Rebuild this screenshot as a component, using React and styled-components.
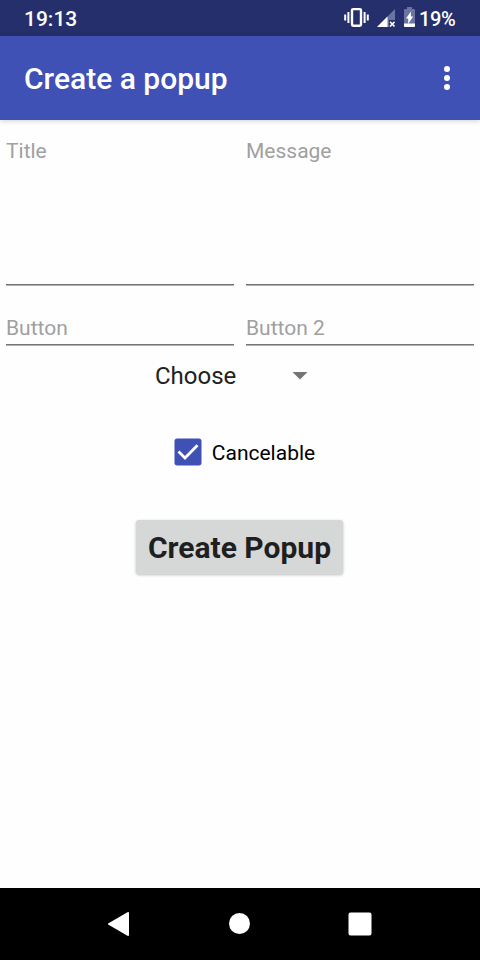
import { useState } from "react";
import styled, { createGlobalStyle } from "styled-components";

const GlobalStyle = createGlobalStyle`
  * {
    box-sizing: border-box;
  }
  body {
    margin: 0;
    background-color: #fff;
    font-family: Roboto, "Liberation Sans", sans-serif;
  }
`;

const Screen = styled.div`
  display: flex;
  flex-direction: column;
  width: 480px;
  height: 960px;
  overflow: hidden;
  background-color: #fefefe;
`;

const StatusBar = styled.header`
  display: flex;
  align-items: center;
  justify-content: space-between;
  flex: none;
  height: 36px;
  padding: 2px 24.5px 0 24px;
  background-color: #242f6b;
  color: #fff;
  font-size: 21px;
  font-weight: 500;
  line-height: 34px;
`;

const StatusIcons = styled.div`
  display: flex;
  align-items: center;
  height: 34px;
`;

const StatusSvg = styled.svg`
  display: block;
  margin: 0 ${({ $gap }) => $gap}px 4px 0;
`;

const Battery = styled.span`
  font-size: 20px;
  letter-spacing: -0.3px;
`;

const AppBar = styled.div`
  display: flex;
  align-items: center;
  justify-content: space-between;
  flex: none;
  height: 84px;
  padding: 0 30px 0 24px;
  background-color: #3f51b5;
  box-shadow: 0 1px 5px rgba(0, 0, 0, 0.18);
`;

const AppTitle = styled.h1`
  margin: 0;
  padding-top: 2px;
  color: #fff;
  font-size: 30px;
  font-weight: 500;
  line-height: 36px;
`;

const MenuButton = styled.button`
  display: flex;
  flex-direction: column;
  gap: 3px;
  padding: 0;
  border: 0;
  background: none;
`;

const Dot = styled.span`
  width: 6px;
  height: 6px;
  border-radius: 50%;
  background-color: #fff;
`;

const Form = styled.main`
  display: flex;
  flex: 1;
  flex-direction: column;
  align-items: center;
`;

const Fields = styled.div`
  display: grid;
  grid-template-columns: 228px 228px;
  grid-template-rows: 166px 60px;
  column-gap: 12px;
`;

const Field = styled.div`
  display: flex;
  align-items: ${({ $tall }) => ($tall ? "flex-start" : "flex-end")};
  padding: ${({ $tall }) => ($tall ? "18px 0 0" : "0 0 4px")};
  border-bottom: 1px solid #b0b0b0;
  box-shadow: inset 0 -1px 0 #757575;
  color: #a0a0a0;
  font-size: 21px;
  line-height: 26px;
`;

const Spinner = styled.button`
  display: flex;
  align-items: center;
  justify-content: space-between;
  width: 153px;
  height: 36px;
  margin: 12px 0 0 -17px;
  padding: 0;
  border: 0;
  background: none;
  color: #212121;
  font-family: inherit;
  font-size: 24px;
`;

const CheckRow = styled.button`
  display: flex;
  align-items: center;
  gap: 10px;
  height: 48px;
  margin: 34px 0 0 9px;
  padding: 0;
  border: 0;
  background: none;
  color: #000;
  font-family: inherit;
  font-size: 21px;
`;

const CheckBox = styled.span`
  width: 28px;
  height: 28px;

  svg {
    display: block;
  }
`;

const CheckLabel = styled.span`
  padding-top: 2px;
`;

const CreateButton = styled.button`
  width: 207px;
  height: 54px;
  margin: 44px 0 0 -1px;
  padding: 2px 0 0;
  border: 0;
  border-radius: 3px;
  background-color: #d6d8d7;
  box-shadow: 0 1px 3px rgba(0, 0, 0, 0.26);
  color: #1f1f1f;
  font-family: inherit;
  font-size: 30px;
  font-weight: 700;
  line-height: 36px;
`;

const NavBar = styled.nav`
  display: flex;
  align-items: center;
  justify-content: space-between;
  flex: none;
  height: 72px;
  padding: 0 108px;
  background-color: #000;
`;

const VibrateIcon = () => (
  <StatusSvg $gap={8} width="25" height="20" viewBox="0 -0.5 25 20">
    <rect x="8" y="1.6" width="9" height="16.6" rx="1.2" fill="none" stroke="#fff" strokeWidth="2.4" />
    <path d="M1.2 7v6M4.4 4.5v11M20.6 4.5v11M23.8 7v6" stroke="#fff" strokeWidth="2" />
  </StatusSvg>
);

const SignalIcon = () => (
  <StatusSvg $gap={9} width="18" height="20" viewBox="0 0 18 20">
    <path d="M18 2v11h-6v7H0z" fill="#6b73a0" />
    <path d="M10.5 9.5V20H0z" fill="#fff" />
    <path d="M13 14.8l4.5 4.7M17.5 14.8L13 19.5" stroke="#fff" strokeWidth="1.6" />
  </StatusSvg>
);

const BatteryIcon = () => (
  <StatusSvg $gap={3.5} width="11" height="20" viewBox="0 0 11 20">
    <path d="M3 0h5v2h2q1 0 1 1v16q0 1-1 1H1q-1 0-1-1V3q0-1 1-1h2z" fill="#6b73a0" />
    <path d="M0 16.5h11V19q0 1-1 1H1q-1 0-1-1z" fill="#fff" />
    <path d="M6.9 4.5v5h2.2l-4.9 7.5v-5.5H2z" fill="#fff" />
  </StatusSvg>
);

export default function App() {
  const [cancelable, setCancelable] = useState(true);

  return (
    <>
      <GlobalStyle />
      <Screen>
        <StatusBar>
          <span>19:13</span>
          <StatusIcons>
            <VibrateIcon />
            <SignalIcon />
            <BatteryIcon />
            <Battery>19%</Battery>
          </StatusIcons>
        </StatusBar>
        <AppBar>
          <AppTitle>Create a popup</AppTitle>
          <MenuButton aria-label="More options">
            <Dot />
            <Dot />
            <Dot />
          </MenuButton>
        </AppBar>
        <Form>
          <Fields>
            <Field $tall>Title</Field>
            <Field $tall>Message</Field>
            <Field>Button</Field>
            <Field>Button 2</Field>
          </Fields>
          <Spinner>
            Choose
            <svg width="16" height="8" viewBox="0 0 16 8">
              <path d="M0.5 0h15L8 7.5z" fill="#757575" />
            </svg>
          </Spinner>
          <CheckRow onClick={() => setCancelable(!cancelable)}>
            <CheckBox>
              <svg width="28" height="28" viewBox="0 0 28 28">
                <rect
                  x="1.75"
                  y="1.75"
                  width="24.5"
                  height="24.5"
                  rx="1.5"
                  fill={cancelable ? "#3f51b5" : "#fff"}
                  stroke="#3f51b5"
                  strokeWidth="2.5"
                />
                {cancelable && (
                  <path d="M4.5 13.5l6.5 6.5L23.5 7.2" fill="none" stroke="#fff" strokeWidth="2.8" />
                )}
              </svg>
            </CheckBox>
            <CheckLabel>Cancelable</CheckLabel>
          </CheckRow>
          <CreateButton>Create Popup</CreateButton>
        </Form>
        <NavBar>
          <svg width="21" height="24" viewBox="0 0 21 24">
            <path d="M1 12L20 1v22z" fill="#fff" stroke="#fff" strokeWidth="2" strokeLinejoin="round" />
          </svg>
          <svg width="22" height="22" viewBox="0 0 22 22">
            <circle cx="11.5" cy="10.5" r="10.5" fill="#fff" />
          </svg>
          <svg width="24" height="24" viewBox="0 0 24 24">
            <rect x="0.5" y="0.5" width="23" height="23" rx="2" fill="#fff" />
          </svg>
        </NavBar>
      </Screen>
    </>
  );
}
